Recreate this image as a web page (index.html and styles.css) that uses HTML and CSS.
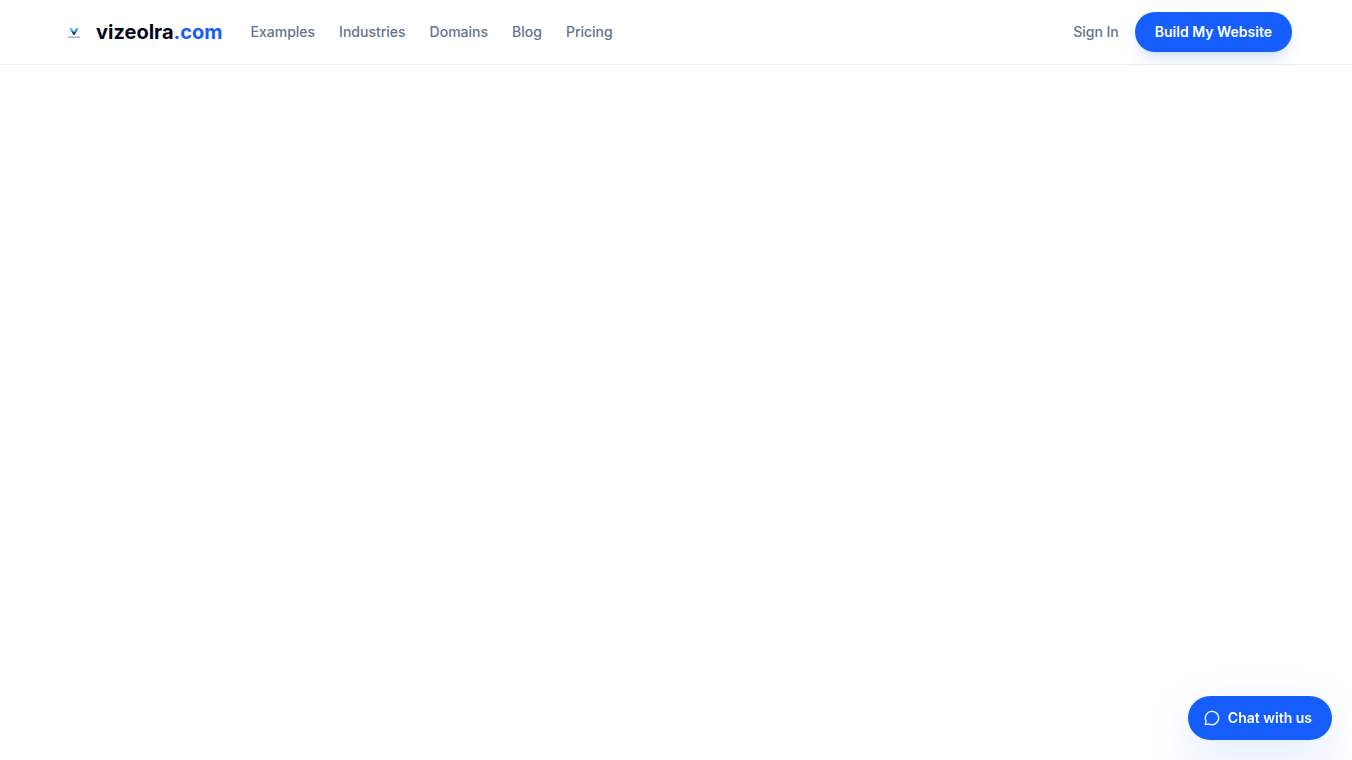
FILE: index.html
```html
<!DOCTYPE html>
<html lang="en">
<head>
<meta charset="utf-8">
<meta name="viewport" content="width=device-width, initial-scale=1">
<title>vizeolra.com</title>
<link rel="stylesheet" href="styles.css">
</head>
<body>
<header class="site-header">
  <div class="header-inner">
    <a class="brand" href="#">
      <svg class="brand-logo" viewBox="0 0 28 28" aria-hidden="true">
        <path d="M9.300 10 L12 10.500 L14 13.700 L14 17 L12.800 16 Z" fill="#35aef0"/>
        <path d="M18.700 10 L16 10.500 L14 13.700 L14 17 L15.200 16 Z" fill="#3f9add"/>
        <path d="M11 12.500 L14 14.500 L17 12.500 L14.500 17 H13.500 Z" fill="#0b4796"/>
        <path d="M8 19.200 H20" stroke="#a3a8ba" stroke-width="1.400"/>
      </svg>
      <span class="brand-name">vizeolra<span class="brand-tld">.com</span></span>
    </a>
    <nav class="main-nav" aria-label="Main">
      <a href="#">Examples</a>
      <a href="#">Industries</a>
      <a href="#">Domains</a>
      <a href="#">Blog</a>
      <a href="#">Pricing</a>
    </nav>
    <div class="actions">
      <a class="sign-in" href="#">Sign In</a>
      <button class="cta" type="button">Build My Website</button>
    </div>
  </div>
</header>
<main></main>
<button class="chat" type="button">
  <svg class="chat-icon" viewBox="0 0 24 24" aria-hidden="true"><path d="M2.992 16.342a2 2 0 0 1 .094 1.167l-1.065 3.290a1 1 0 0 0 1.236 1.168l3.413-.998a2 2 0 0 1 1.099.092 10 10 0 1 0-4.777-4.719"/></svg>
  Chat with us
</button>
</body>
</html>
```

FILE: styles.css
```css
* { box-sizing: border-box; }
body {
  margin: 0;
  background: #fff;
  color: #020617;
  font-family: Inter, "Liberation Sans", sans-serif;
  font-size: 14px;
  line-height: 20px;
}
a { color: inherit; text-decoration: none; }
button { border: 0; font: inherit; font-weight: 600; color: #fff; background: #155dfc; cursor: pointer; }
.site-header { border-bottom: 1px solid #eceff3; }
.header-inner {
  display: flex;
  align-items: center;
  max-width: 1280px;
  height: 64px;
  margin: 0 auto;
  padding: 0 24px;
}
.brand { display: flex; align-items: center; gap: 8px; }
.brand-logo { width: 28px; height: 28px; }
.brand-name { font-size: 20px; line-height: 28px; font-weight: 700; }
.brand-tld { color: #155dfc; }
.main-nav { display: flex; gap: 24px; margin-left: 28px; font-weight: 500; color: #62748e; }
.actions { display: flex; align-items: center; gap: 16px; margin-left: auto; font-weight: 500; color: #62748e; }
.cta {
  padding: 10px 20px;
  border-radius: 20px;
  box-shadow: 0 10px 15px -3px #155dfc26, 0 4px 6px -4px #155dfc26;
}
.chat {
  position: fixed;
  right: 20px;
  bottom: 20px;
  display: flex;
  align-items: center;
  gap: 8px;
  padding: 12px 20px 12px 16px;
  border-radius: 22px;
  box-shadow: 0 16px 48px #155dfc24;
}
.chat-icon { width: 16px; height: 16px; fill: none; stroke: currentColor; stroke-width: 2; stroke-linecap: round; stroke-linejoin: round; }
```
